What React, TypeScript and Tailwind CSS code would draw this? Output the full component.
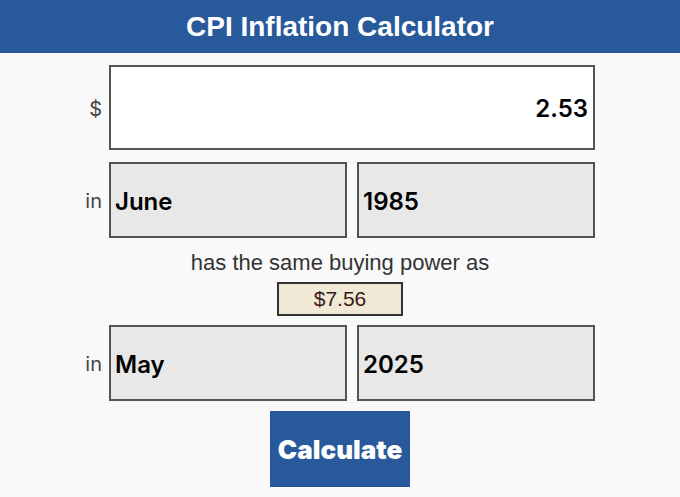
const inputFont = { fontFamily: "Inter, 'Noto Sans', sans-serif" };
const arial = { fontFamily: "'Liberation Sans', Arial, sans-serif" };

function Label({ children }: { children: React.ReactNode }) {
  return (
    <div className="w-[24px] shrink-0 pr-[7px] pt-[2px] text-right text-[20px] text-[#444]" style={inputFont}>
      {children}
    </div>
  );
}

function Field({ value }: { value: string }) {
  return (
    <div
      className="flex h-[76px] w-[238px] items-center border-2 border-[#555] bg-[#e8e8e8] pl-[4px] pt-[3px] text-[24px] font-semibold text-black"
      style={inputFont}
    >
      {value}
    </div>
  );
}

function DateRow({ month, year }: { month: string; year: string }) {
  return (
    <div className="flex items-center">
      <Label>in</Label>
      <div className="flex gap-[10px]">
        <Field value={month} />
        <Field value={year} />
      </div>
    </div>
  );
}

export default function App() {
  return (
    <div className="min-h-[497px] w-full bg-[#f9f9f9]">
      <header className="flex h-[53px] items-center justify-center bg-[#28599b]">
        <h1 className="text-[28px] font-bold text-white" style={arial}>
          CPI Inflation Calculator
        </h1>
      </header>

      <div className="flex flex-col items-center pt-[12px]">
        <div className="flex items-center">
          <Label>$</Label>
          <div
            className="flex h-[85px] w-[486px] items-center justify-end border-2 border-[#555] bg-white pr-[5px] pt-[3px] text-[24px] font-semibold text-black"
            style={inputFont}
          >
            2.53
          </div>
        </div>

        <div className="mt-[12px]">
          <DateRow month="June" year="1985" />
        </div>

        <p className="mt-[11px] text-[22px] leading-[27px] text-[#333]" style={arial}>
          has the same buying power as
        </p>

        <div
          className="mt-[6px] flex h-[34px] w-[126px] items-center justify-center border-2 border-[#333] bg-[#efe9d6] text-[21px] text-[#3b1818]"
          style={arial}
        >
          $7.56
        </div>

        <div className="mt-[9px]">
          <DateRow month="May" year="2025" />
        </div>

        <button
          className="mt-[10px] h-[76px] w-[140px] bg-[#28599b] text-[26px] font-black text-white"
          style={inputFont}
        >
          Calculate
        </button>
      </div>
    </div>
  );
}
